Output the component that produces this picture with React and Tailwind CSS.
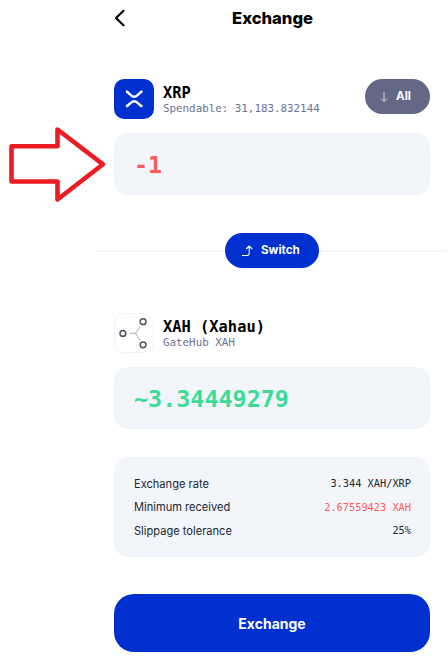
const mono = "font-['DejaVu_Sans_Mono',monospace]";

function TokenHeader({ icon, name, detail, action }) {
  return (
    <div className="flex h-10 items-center">
      {icon}
      <div className={`ml-[9px] flex-1 whitespace-nowrap ${mono}`}>
        <div className="h-[18px] text-[15.4px] leading-[18px] font-bold text-black">{name}</div>
        <div className="h-[13px] text-[10.85px] leading-[13px] text-[#6b7190]">{detail}</div>
      </div>
      {action}
    </div>
  );
}

function Row({ label, value, tone }) {
  return (
    <div className="flex h-[23.4px] items-center justify-between">
      <span className="text-[11.1px] text-[#23262f]">{label}</span>
      <span className={`text-[10.3px] ${mono} ${tone}`}>{value}</span>
    </div>
  );
}

function XrpIcon() {
  return (
    <div className="flex size-10 items-center justify-center rounded-[10px] bg-[#0030cf]">
      <svg width="40" height="40" viewBox="0 0 40 40" fill="none" stroke="#fff" strokeWidth="2.4">
        <path d="M11.9 12.8H13.2L16.8 16.1Q20.2 19.2 23.6 16.1L27.2 12.8H28.5" />
        <path d="M11.9 27H13.2L16.8 23.8Q20.2 20.7 23.6 23.8L27.2 27H28.5" />
      </svg>
    </div>
  );
}

function XahIcon() {
  return (
    <div className="size-10 rounded-[10px] border border-[#f4f4f6] bg-white">
      <svg width="38" height="38" viewBox="1 1 38 38" fill="none">
        <path d="M15.5 20.3H21.5L26 13.5M21.5 20.3L26 27" stroke="#bfc0c6" strokeWidth="1.2" />
        <g stroke="#50525f" strokeWidth="1.5">
          <circle cx="8.9" cy="20.4" r="2.9" />
          <circle cx="29.1" cy="8.7" r="2.9" />
          <circle cx="29.1" cy="31.8" r="2.9" />
        </g>
      </svg>
    </div>
  );
}

export default function App() {
  return (
    <div className="relative h-[664px] w-[448px] overflow-hidden bg-white font-['Inter',sans-serif]">
      <main className="ml-[114px] w-[316px]">
        <header className="flex h-9 items-center">
          <svg width="12" height="18" viewBox="0 0 12 18" fill="none" stroke="#000" strokeWidth="2.2" strokeLinecap="round" strokeLinejoin="round">
            <path d="M9.5 1.8L2 9L9.5 16.2" />
          </svg>
          <h1 className="mr-[11px] flex-1 text-center text-[16.6px] font-extrabold text-black">Exchange</h1>
        </header>

        <section className="pt-[43px]">
          <TokenHeader
            icon={<XrpIcon />}
            name="XRP"
            detail="Spendable: 31,183.832144"
            action={
              <button className="mb-[5px] flex h-[35px] w-[65px] items-center rounded-full bg-[#626885] pl-[15px] text-[11.6px] font-bold text-white">
                <svg className="mr-2" width="8" height="12" viewBox="0 0 8 12" fill="none" stroke="#d8dae5" strokeWidth="1">
                  <path d="M4 1V10.5M1 7.5L4 10.5L7 7.5" />
                </svg>
                All
              </button>
            }
          />
          <div className={`mt-[14px] flex h-[62px] items-center rounded-[14px] bg-[#f2f6fb] pt-[3px] pl-5 text-[23.4px] font-bold text-[#ff5b5b] ${mono}`}>-1</div>
        </section>

        <div className="mt-[38px] -mr-4 -ml-5 flex h-[35px] items-center">
          <div className="h-[2px] w-[131px] bg-[#f6f6f7]" />
          <button className="flex h-[35px] w-[94px] items-center rounded-full bg-[#0030cf] pl-[17px] text-[11.6px] font-bold text-white">
            <svg className="mr-2" width="11" height="12" viewBox="0 0 11 12" fill="none" stroke="#fff" strokeWidth="1.1">
              <path d="M0 10.5H5Q7.2 10.5 7.2 8.3V1M4.2 4L7.2 1L10.2 4" />
            </svg>
            Switch
          </button>
          <div className="h-[2px] flex-1 bg-[#f6f6f7]" />
        </div>

        <section className="pt-[45px]">
          <TokenHeader icon={<XahIcon />} name="XAH (Xahau)" detail="GateHub XAH" />
          <div className={`mt-[14px] flex h-[62px] items-center rounded-[14px] bg-[#f2f6fb] pt-[3px] pl-5 text-[23.4px] font-bold text-[#3cdc97] ${mono}`}>~3.34449279</div>
        </section>

        <section className="mt-7 flex h-[100px] flex-col justify-center rounded-[14px] bg-[#f2f6fb] pr-[19px] pl-5 pt-[1px]">
          <Row label="Exchange rate" value="3.344 XAH/XRP" tone="text-[#23262f]" />
          <Row label="Minimum received" value="2.67559423 XAH" tone="text-[#ff5b5b]" />
          <Row label="Slippage tolerance" value="25%" tone="text-[#23262f]" />
        </section>

        <button className="mt-[37px] h-[58px] w-full rounded-[20px] bg-[#0030cf] text-[14px] font-bold text-white">Exchange</button>
      </main>

      <svg className="absolute top-[120px] left-0" width="110" height="88" viewBox="0 120 110 88" fill="none" stroke="#ed1c24" strokeWidth="4.6" strokeLinejoin="round">
        <path d="M11.5 146.3H57.5V129.5L103 164.3L57.5 199.5V181.5H11.5Z" />
      </svg>
    </div>
  );
}
